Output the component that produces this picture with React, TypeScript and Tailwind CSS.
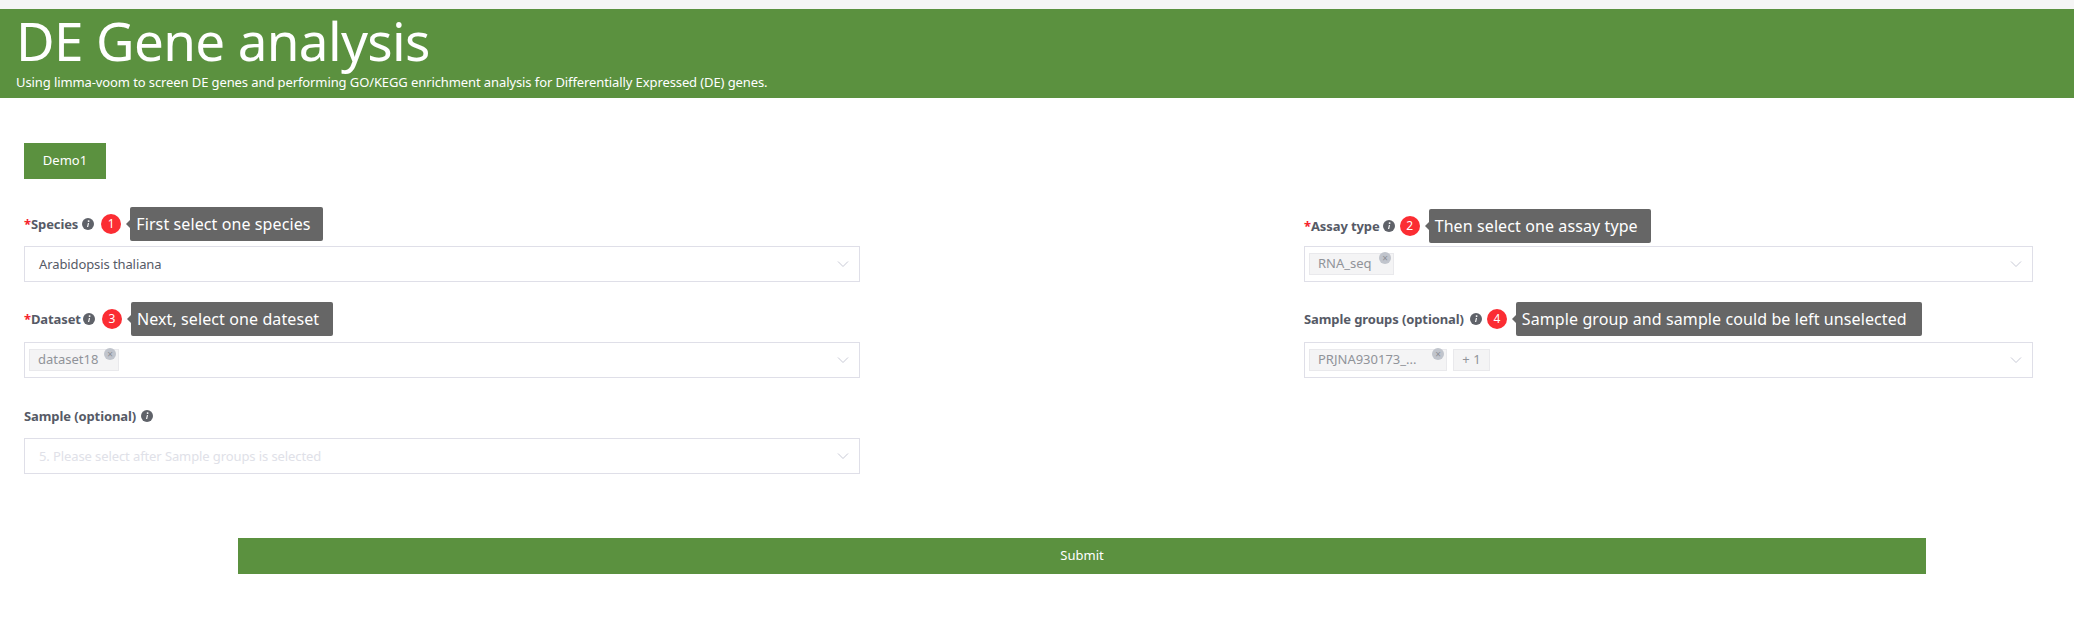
import React from "react";

const F = "[font-family:'Noto_Sans','Liberation_Sans',sans-serif]";

function Info() {
  return (
    <svg width="12" height="12" viewBox="0 0 12 12" className="shrink-0">
      <circle cx="6" cy="6" r="6" fill="#5f6269" />
      <circle cx="6.6" cy="3.1" r="0.95" fill="#fff" />
      <path d="M5.9 5 L7 5 L6.2 9 L5 9 Z" fill="#fff" />
    </svg>
  );
}

function Chevron() {
  return (
    <svg width="12" height="8" viewBox="0 0 12 8" className="shrink-0" fill="none" stroke="#c8cad6" strokeWidth="1">
      <path d="M1 1.5 L6 6.5 L11 1.5" />
    </svg>
  );
}

function Tag({ text, width }: { text: string; width: string }) {
  return (
    <span className={`relative flex h-[22px] items-center border border-[#e9e9ec] bg-[#f4f4f5] pl-[8px] text-[13px] text-[#909399] ${width}`}>
      {text}
      <span className="absolute right-[2px] top-[-2px] flex h-[12px] w-[12px] items-center justify-center rounded-full bg-[#c0c4cc] text-[10px] leading-none text-[#8d9097]">×</span>
    </span>
  );
}

function Hint({ n, text, gap, width }: { n: number; text: string; gap: string; width: string }) {
  return (
    <>
      <span className={`flex h-[20px] w-[20px] shrink-0 items-center justify-center rounded-full bg-[#fb2d33] text-[12px] text-white ${gap}`}>{n}</span>
      <span className={`relative ml-[9px] flex h-[34px] items-center rounded-[2px] bg-[#666666] pl-[6px] text-[16px] tracking-[0.1px] text-white ${width}`}>
        <span className="absolute left-[-4px] top-[13px] h-0 w-0 border-y-[4px] border-r-[4px] border-y-transparent border-r-[#666666]" />
        {text}
      </span>
    </>
  );
}

function Label({ children, req }: { children: string; req?: boolean }) {
  return (
    <span className="text-[13px] font-bold leading-none tracking-[-0.1px] text-[#565a66]">
      {req && <span className="text-[#f5222d]">*</span>}
      {children}
    </span>
  );
}

function Select({ children }: { children: React.ReactNode }) {
  return (
    <div className="flex h-[36px] items-center justify-between border border-[#dfdfe8] bg-white pr-[10px]">
      <div className="flex items-center gap-[6px] pl-[4px]">{children}</div>
      <Chevron />
    </div>
  );
}

export default function App() {
  return (
    <div className={`min-h-[627px] bg-white ${F}`}>
      <div className="h-[9px] bg-[#f5f5f5]" />
      <header className="flex h-[89px] flex-col bg-[#5b913f] pl-[16px] text-white">
        <h1 className="mt-[3px] h-[58px] text-[53px] font-normal leading-[58px] tracking-[-0.65px]">DE Gene analysis</h1>
        <p className="mt-[3px] text-[13px] leading-[18px] tracking-[-0.1px]">Using limma-voom to screen DE genes and performing GO/KEGG enrichment analysis for Differentially Expressed (DE) genes.</p>
      </header>

      <main className="pl-[24px] pr-[41px] pt-[45px]">
        <button className="block h-[36px] w-[82px] bg-[#5b913f] text-[13px] text-white">Demo1</button>

        <div className="mt-[28px] grid grid-cols-[836px_729px] justify-between">
          <div>
            <div className="mb-[5px] flex h-[34px] items-center">
              <Label req>Species</Label>
              <span className="ml-[4px]"><Info /></span>
              <Hint n={1} text="First select one species" gap="ml-[7px]" width="w-[193px]" />
            </div>
            <Select><span className="pl-[10px] pt-[1px] text-[13px] tracking-[-0.1px] text-[#565a66]">Arabidopsis thaliana</span></Select>

            <div className="mb-[6px] mt-[20px] flex h-[34px] items-center">
              <Label req>Dataset</Label>
              <span className="ml-[2px]"><Info /></span>
              <Hint n={3} text="Next, select one dateset" gap="ml-[7px]" width="w-[202px]" />
            </div>
            <Select><Tag text="dataset18" width="w-[90px]" /></Select>

            <div className="mb-[12px] mt-[28px] flex h-[20px] items-center">
              <Label>Sample (optional)</Label>
              <span className="ml-[5px]"><Info /></span>
            </div>
            <Select><span className="pl-[10px] pt-[1px] text-[13px] tracking-[-0.1px] text-[#e0e1e8]">5. Please select after Sample groups is selected</span></Select>
          </div>

          <div>
            <div className="mb-[3px] mt-[2px] flex h-[34px] items-center">
              <Label req>Assay type</Label>
              <span className="ml-[3px]"><Info /></span>
              <Hint n={2} text="Then select one assay type" gap="ml-[5px]" width="w-[222px]" />
            </div>
            <Select><Tag text="RNA_seq" width="w-[85px]" /></Select>

            <div className="mb-[6px] mt-[20px] flex h-[34px] items-center">
              <Label>Sample groups (optional)</Label>
              <span className="ml-[6px]"><Info /></span>
              <Hint n={4} text="Sample group and sample could be left unselected" gap="ml-[5px]" width="w-[406px]" />
            </div>
            <Select>
              <Tag text="PRJNA930173_..." width="w-[138px]" />
              <span className="flex h-[22px] w-[37px] items-center justify-center border border-[#e9e9ec] bg-[#f4f4f5] text-[13px] text-[#909399]">+ 1</span>
            </Select>
          </div>
        </div>

        <div className="mt-[64px] pl-[214px] pr-[107px]">
          <button className="block h-[36px] w-full bg-[#5b913f] text-[13px] text-white">Submit</button>
        </div>
      </main>
    </div>
  );
}
